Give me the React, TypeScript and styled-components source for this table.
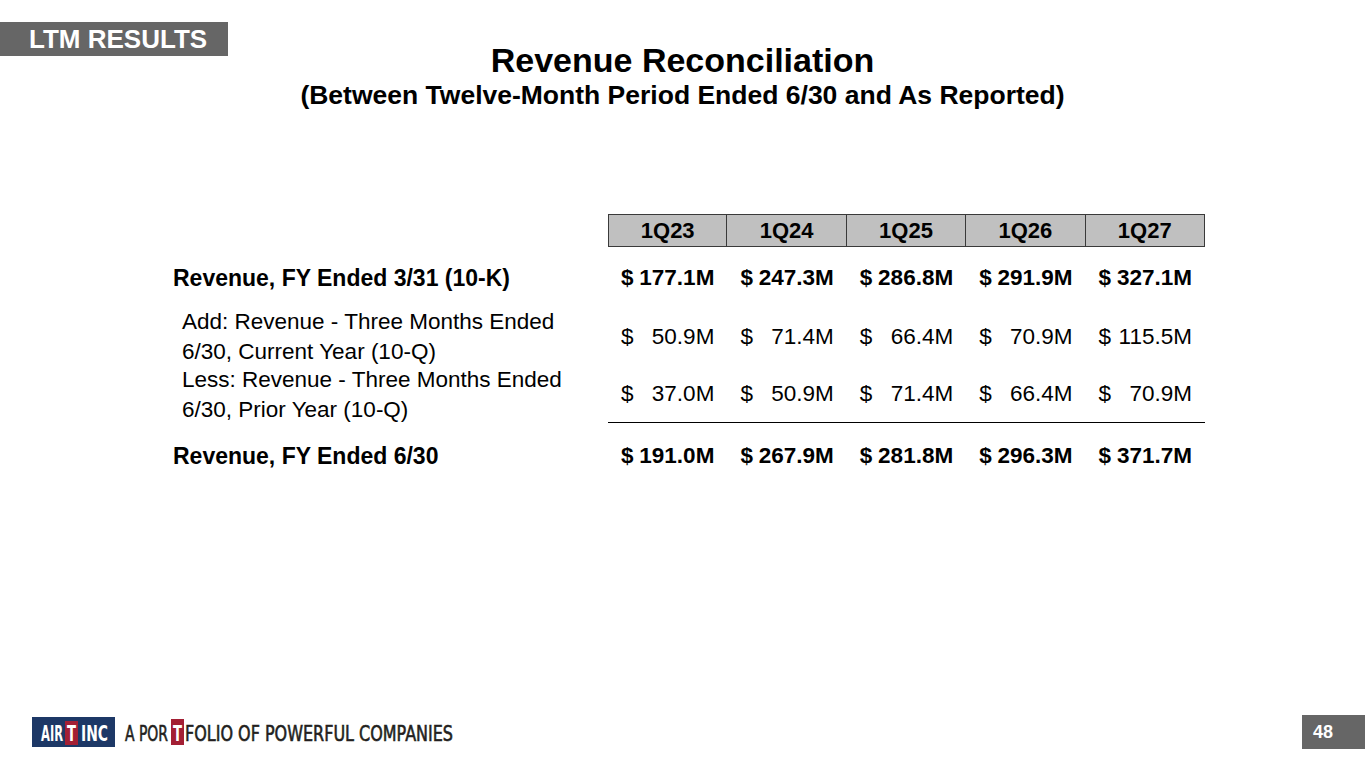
import React from "react";
import styled, { createGlobalStyle } from "styled-components";

const GlobalStyle = createGlobalStyle`
  html, body {
    margin: 0;
    padding: 0;
    background: #ffffff;
  }
  body {
    font-family: "Liberation Sans", Arial, sans-serif;
    color: #000;
  }
`;

const quarters = ["1Q23", "1Q24", "1Q25", "1Q26", "1Q27"];

const rows = [
  {
    label: ["Revenue, FY Ended 3/31 (10-K)"],
    values: ["177.1M", "247.3M", "286.8M", "291.9M", "327.1M"],
    bold: true,
    height: 61,
  },
  {
    label: ["Add: Revenue - Three Months Ended", "6/30, Current Year (10-Q)"],
    values: ["50.9M", "71.4M", "66.4M", "70.9M", "115.5M"],
    bold: false,
    height: 58,
  },
  {
    label: ["Less: Revenue - Three Months Ended", "6/30, Prior Year (10-Q)"],
    values: ["37.0M", "50.9M", "71.4M", "66.4M", "70.9M"],
    bold: false,
    height: 57,
    rule: true,
  },
  {
    label: ["Revenue, FY Ended 6/30"],
    values: ["191.0M", "267.9M", "281.8M", "296.3M", "371.7M"],
    bold: true,
    height: 66,
  },
];

export default function App() {
  return (
    <>
      <GlobalStyle />
      <Slide>
        <Header>
          <SectionTag>LTM RESULTS</SectionTag>
          <Titles>
            <Title>Revenue Reconciliation</Title>
            <Subtitle>(Between Twelve-Month Period Ended 6/30 and As Reported)</Subtitle>
          </Titles>
          <div />
        </Header>

        <Table>
          <Blank />
          {quarters.map((q, i) => (
            <HeadCell key={q} $first={i === 0}>
              {q}
            </HeadCell>
          ))}

          {rows.map((r, ri) => (
            <React.Fragment key={ri}>
              <Label $bold={r.bold} $h={r.height}>
                {r.label.map((l) => (
                  <span key={l}>{l}</span>
                ))}
              </Label>
              {r.values.map((v, vi) => (
                <Value key={vi} $bold={r.bold} $h={r.height} $rule={!!r.rule}>
                  <span>$</span>
                  <span>{v}</span>
                </Value>
              ))}
            </React.Fragment>
          ))}
        </Table>

        <Footer>
          <Logo />
          <PageNo>48</PageNo>
        </Footer>
      </Slide>
    </>
  );
}

// Air T logo and tagline, drawn as a small svg with real text
function Logo() {
  return (
    <LogoSvg width="421" height="30" viewBox="0 0 421 30">
      <rect x="0" y="0" width="83" height="30" fill="#1d3866" />
      <text x="9" y="24" fontSize="22" fontWeight="bold" fill="#fff" textLength="22" lengthAdjust="spacingAndGlyphs">
        AIR
      </text>
      <rect x="33" y="4" width="13" height="24" fill="#a31f34" />
      <text x="35" y="24" fontSize="22" fontWeight="bold" fill="#fff" textLength="9" lengthAdjust="spacingAndGlyphs">
        T
      </text>
      <text x="49" y="24" fontSize="22" fontWeight="bold" fill="#fff" textLength="27" lengthAdjust="spacingAndGlyphs">
        INC
      </text>

      <TagText x="93" y="24" fontSize="22" textLength="43" lengthAdjust="spacingAndGlyphs">
        A POR
      </TagText>
      <rect x="139" y="2" width="13" height="26" fill="#a31f34" />
      <text x="141" y="24" fontSize="22" fontWeight="bold" fill="#fff" textLength="9" lengthAdjust="spacingAndGlyphs">
        T
      </text>
      <TagText x="153" y="24" fontSize="22" textLength="268" lengthAdjust="spacingAndGlyphs">
        FOLIO OF POWERFUL COMPANIES
      </TagText>
    </LogoSvg>
  );
}

const Slide = styled.div`
  width: 1365px;
  height: 768px;
  display: flex;
  flex-direction: column;
  overflow: hidden;
  background: #fff;
`;

const Header = styled.header`
  display: grid;
  grid-template-columns: 1fr auto 1fr;
  align-items: start;
`;

const SectionTag = styled.div`
  margin-top: 22px;
  width: 228px;
  height: 34px;
  box-sizing: border-box;
  padding-left: 29px;
  background: #666666;
  color: #fff;
  font-weight: bold;
  font-size: 26px;
  line-height: 34px;
  white-space: nowrap;
`;

const Titles = styled.div`
  padding-top: 41px;
  display: flex;
  flex-direction: column;
  align-items: center;
  gap: 1px;
  font-weight: bold;
`;

const Title = styled.h1`
  margin: 0;
  font-size: 34px;
  line-height: 38px;
  font-weight: bold;
`;

const Subtitle = styled.h2`
  margin: 0;
  font-size: 26.5px;
  line-height: 30px;
  font-weight: bold;
  white-space: nowrap;
`;

const Table = styled.div`
  margin-top: 104px;
  margin-left: 168px;
  display: grid;
  grid-template-columns: 440px repeat(5, 119.4px);
`;

const Blank = styled.div``;

const HeadCell = styled.div<{ $first: boolean }>`
  height: 33px;
  box-sizing: border-box;
  background: #c0c0c0;
  border: 1px solid #3a3a3a;
  border-left: ${(p) => (p.$first ? "1px solid #3a3a3a" : "none")};
  display: flex;
  align-items: center;
  justify-content: center;
  font-weight: bold;
  font-size: 22px;
`;

const Label = styled.div<{ $bold: boolean; $h: number }>`
  height: ${(p) => p.$h}px;
  display: flex;
  flex-direction: column;
  justify-content: center;
  padding-left: ${(p) => (p.$bold ? 5 : 14)}px;
  font-weight: ${(p) => (p.$bold ? "bold" : "normal")};
  font-size: ${(p) => (p.$bold ? 23 : 22.5)}px;
  line-height: 30px;
  white-space: nowrap;
`;

const Value = styled.div<{ $bold: boolean; $h: number; $rule: boolean }>`
  height: ${(p) => p.$h}px;
  box-sizing: border-box;
  display: flex;
  align-items: center;
  justify-content: space-between;
  padding: 0 13px 0 13px;
  font-weight: ${(p) => (p.$bold ? "bold" : "normal")};
  font-size: ${(p) => (p.$bold ? 22.5 : 22.5)}px;
  border-bottom: ${(p) => (p.$rule ? "1px solid #000" : "none")};
  white-space: nowrap;
`;

const Footer = styled.footer`
  margin-top: auto;
  margin-bottom: 19px;
  display: flex;
  align-items: center;
`;

const LogoSvg = styled.svg`
  margin-left: 32px;
  display: block;
  font-family: "Liberation Sans Narrow", "DejaVu Sans Condensed", sans-serif;
`;

const TagText = styled.text`
  fill: #231f20;
  stroke: #231f20;
  stroke-width: 0.6px;
`;

const PageNo = styled.div`
  margin-left: auto;
  width: 63px;
  height: 34px;
  box-sizing: border-box;
  padding-left: 11px;
  background: #666666;
  color: #fff;
  font-weight: bold;
  font-size: 18px;
  line-height: 34px;
`;
